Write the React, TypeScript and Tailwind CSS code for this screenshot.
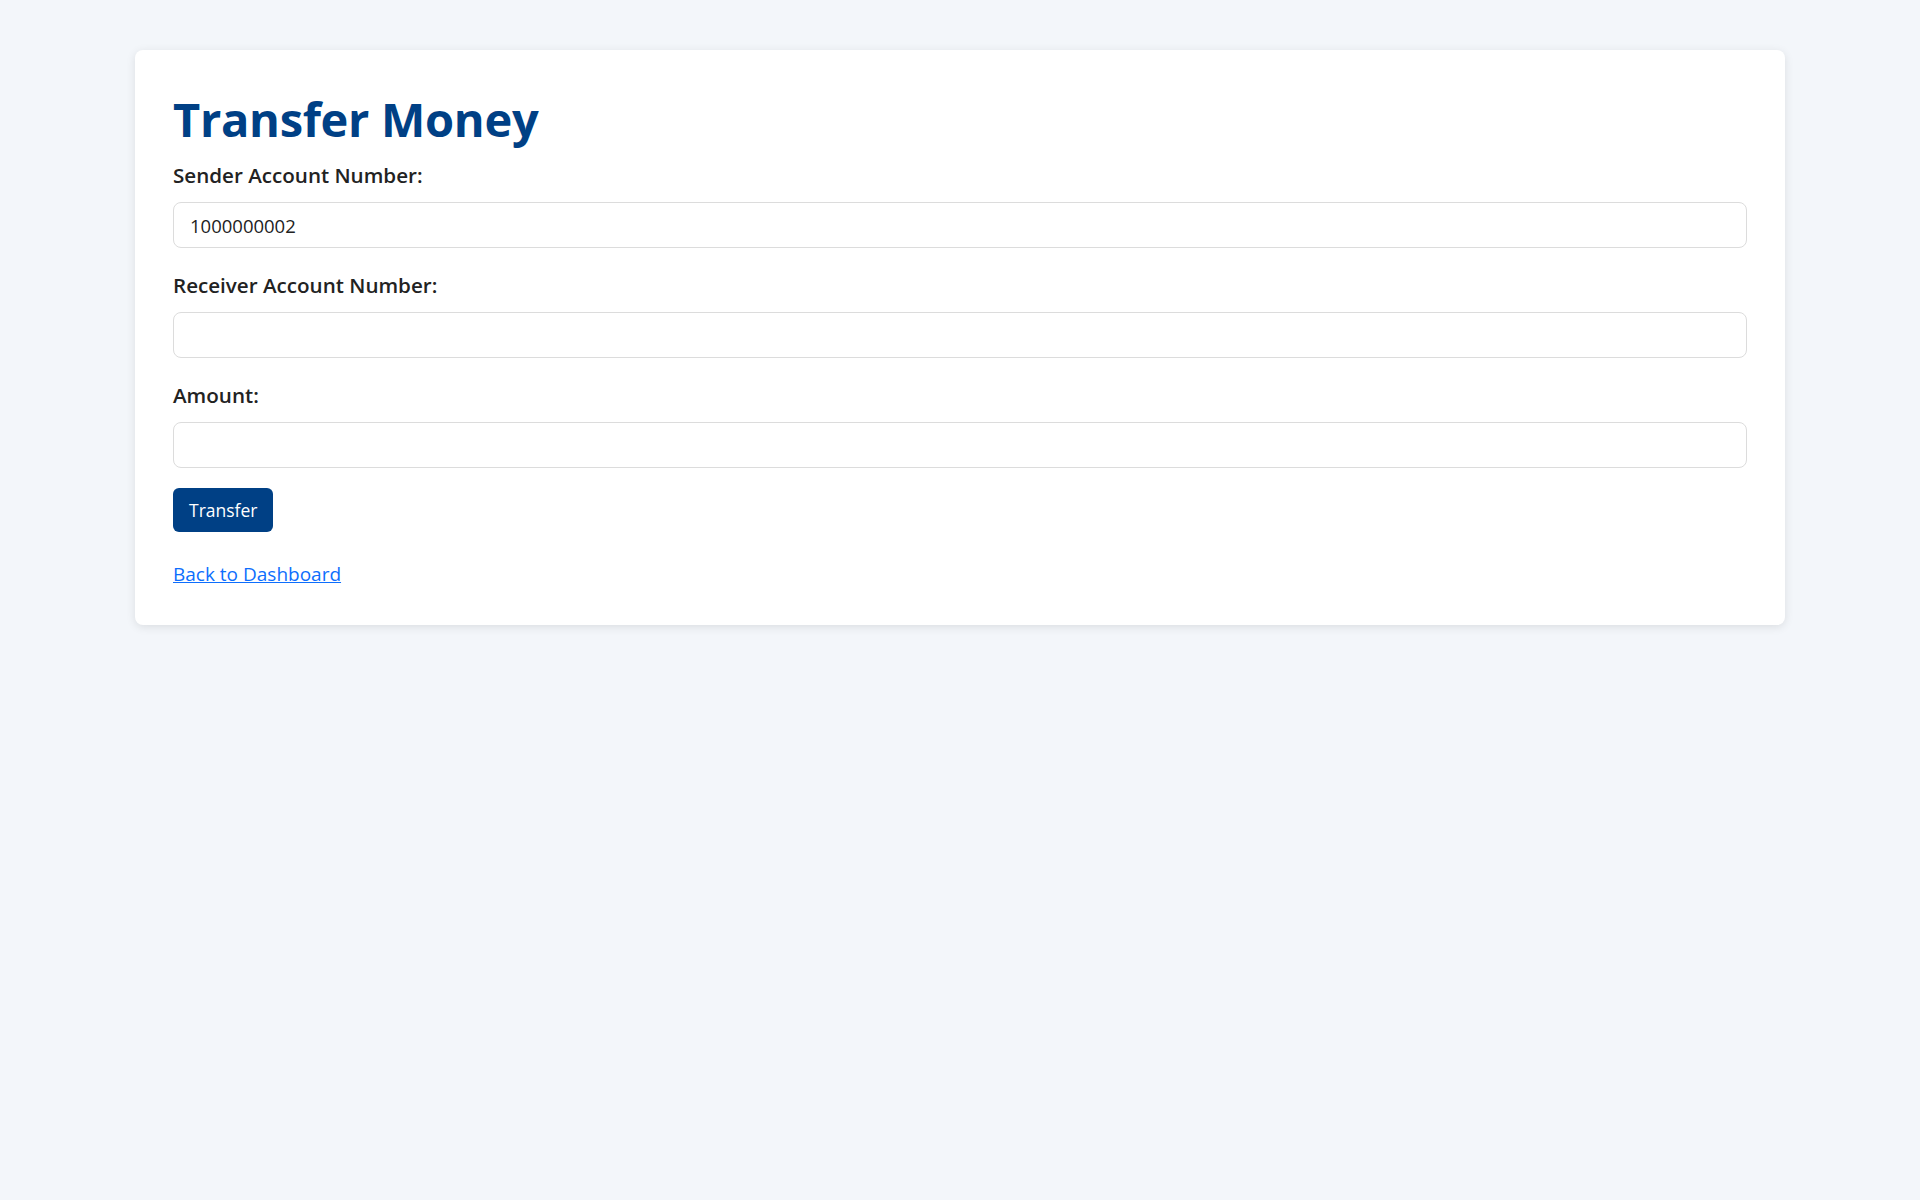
import React, { useState } from 'react';

const font = { fontFamily: '"Open Sans", "Noto Sans", "Liberation Sans", sans-serif' };

interface FieldProps {
  label: string;
  value: string;
  onChange: (v: string) => void;
}

function Field({ label, value, onChange }: FieldProps) {
  return (
    <div className="mb-[24px] flex flex-col gap-[14px]">
      <label className="text-[20.6px] leading-[26px] font-semibold text-[#222]">{label}</label>
      <input
        type="text"
        value={value}
        onChange={(e) => onChange(e.target.value)}
        className="h-[46px] w-full rounded-[8px] border border-[#dcdcdc] bg-white px-[16px] text-[18.5px] text-[#222] outline-none"
      />
    </div>
  );
}

export default function App() {
  const [sender, setSender] = useState('1000000002');
  const [receiver, setReceiver] = useState('');
  const [amount, setAmount] = useState('');

  return (
    <div className="min-h-screen bg-[#f3f6fa] pt-[50px]" style={font}>
      <div className="mx-auto w-[1650px] rounded-[8px] bg-white px-[38px] pt-[40px] pb-[39px] shadow-[0_2px_10px_rgba(0,0,0,0.1)]">
        <h1 className="mb-[14px] text-[47px] leading-[58px] font-bold tracking-[-0.3px] text-[#004085]">
          Transfer Money
        </h1>
        <form onSubmit={(e) => e.preventDefault()}>
          <Field label="Sender Account Number:" value={sender} onChange={setSender} />
          <Field label="Receiver Account Number:" value={receiver} onChange={setReceiver} />
          <Field label="Amount:" value={amount} onChange={setAmount} />
          <button
            type="submit"
            className="-mt-[4px] flex h-[44px] items-center rounded-[6px] bg-[#004085] px-[16px] text-[17.5px] text-white"
          >
            Transfer
          </button>
        </form>
        <a href="#" className="mt-[30px] block w-fit text-[19px] leading-[24px] text-[#0d6efd] underline">
          Back to Dashboard
        </a>
      </div>
    </div>
  );
}
